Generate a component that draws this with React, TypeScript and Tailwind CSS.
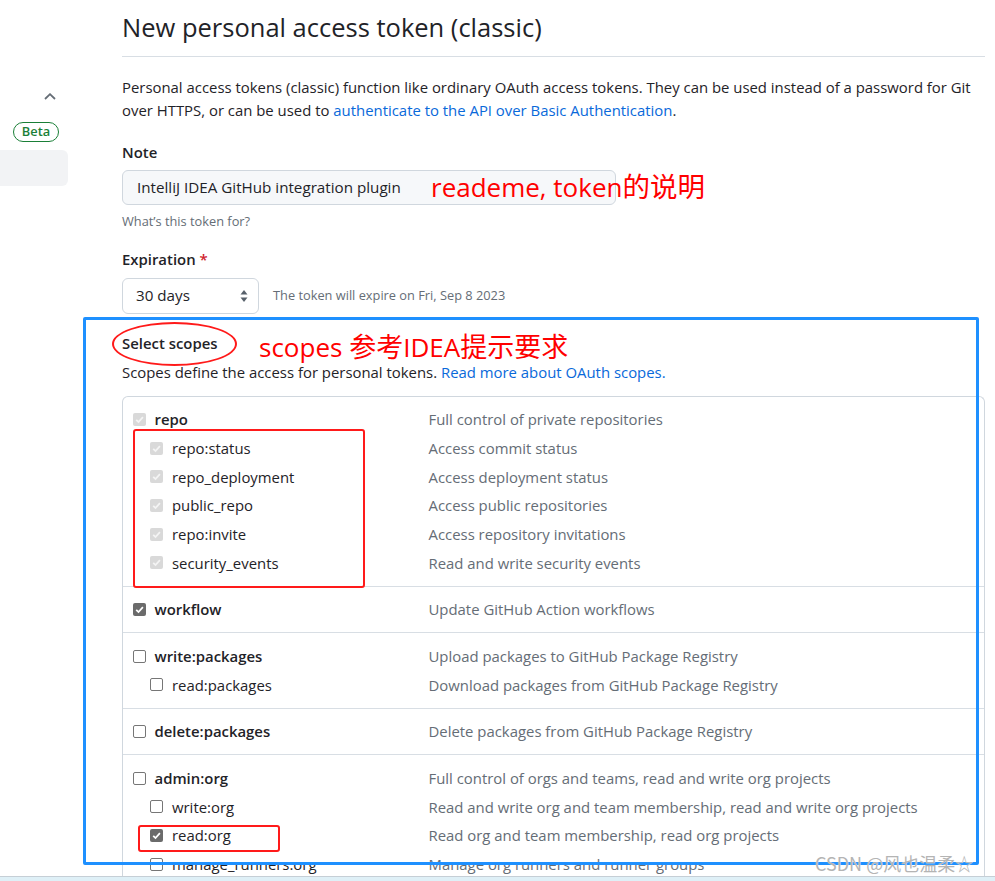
import React from "react";

type State = "off" | "on" | "dim";
type Scope = { name: string; desc: string; state: State; child?: boolean };

const groups: Scope[][] = [
  [
    { name: "repo", desc: "Full control of private repositories", state: "dim" },
    { name: "repo:status", desc: "Access commit status", state: "dim", child: true },
    { name: "repo_deployment", desc: "Access deployment status", state: "dim", child: true },
    { name: "public_repo", desc: "Access public repositories", state: "dim", child: true },
    { name: "repo:invite", desc: "Access repository invitations", state: "dim", child: true },
    { name: "security_events", desc: "Read and write security events", state: "dim", child: true },
  ],
  [{ name: "workflow", desc: "Update GitHub Action workflows", state: "on" }],
  [
    { name: "write:packages", desc: "Upload packages to GitHub Package Registry", state: "off" },
    { name: "read:packages", desc: "Download packages from GitHub Package Registry", state: "off", child: true },
  ],
  [{ name: "delete:packages", desc: "Delete packages from GitHub Package Registry", state: "off" }],
  [
    { name: "admin:org", desc: "Full control of orgs and teams, read and write org projects", state: "off" },
    { name: "write:org", desc: "Read and write org and team membership, read and write org projects", state: "off", child: true },
    { name: "read:org", desc: "Read org and team membership, read org projects", state: "on", child: true },
    { name: "manage_runners:org", desc: "Manage org runners and runner groups", state: "off", child: true },
  ],
];

const Box = ({ state }: { state: State }) => {
  if (state === "off") {
    return <span className="block h-[13px] w-[13px] shrink-0 rounded-[2px] border border-[#767676] bg-white" />;
  }
  return (
    <span
      className={`flex h-[13px] w-[13px] shrink-0 items-center justify-center rounded-[2px] ${
        state === "on" ? "bg-[#6b6b6b]" : "bg-[#d9d9d9]"
      }`}
    >
      <svg viewBox="0 0 12 12" className="h-[11px] w-[11px]">
        <path
          d="M2.4 6.3 L4.9 8.7 L9.7 3.4"
          fill="none"
          stroke={state === "on" ? "#ffffff" : "#f4f4f4"}
          strokeWidth="1.9"
        />
      </svg>
    </span>
  );
};

const ScopeRow = ({ s }: { s: Scope }) => (
  <div className="flex h-[28.7px] items-center">
    <div className={`flex w-[296px] shrink-0 items-center gap-[9px] ${s.child ? "pl-[17.5px]" : ""}`}>
      <Box state={s.state} />
      <span className={s.child ? "text-[#1f2328]" : "font-semibold text-[#1f2328]"}>{s.name}</span>
    </div>
    <span className="text-[#656d76]">{s.desc}</span>
  </div>
);

export default function App() {
  return (
    <div className="relative h-[881px] w-[995px] overflow-hidden bg-white font-['Open_Sans',sans-serif] text-[14.9px] text-[#1f2328]">
      <div className="flex h-[876px] overflow-hidden">
        {/* sidebar */}
        <aside className="w-[122px] shrink-0 pt-[93px]">
          <svg viewBox="0 0 12 7" className="ml-[44px] block h-[7px] w-[12px]">
            <path d="M1 6 L6 1.2 L11 6" fill="none" stroke="#656d76" strokeWidth="1.8" />
          </svg>
          <div className="ml-[13px] mt-[22px] flex h-[20px] w-[46px] items-center justify-center rounded-full border border-[#1a7f37] text-[12.8px] font-semibold text-[#1a7f37]">
            Beta
          </div>
          <div className="mt-[8px] h-[36px] w-[68px] rounded-r-md bg-[#f2f3f5]" />
        </aside>

        {/* main */}
        <main className="w-[863px] shrink-0">
          <div className="border-b border-[#d8dee4] pb-[13px] pt-[11px]">
            <h2 className="text-[25.5px] leading-[32px] font-normal">New personal access token (classic)</h2>
          </div>

          <p className="mt-[19px] leading-[23px]">
            Personal access tokens (classic) function like ordinary OAuth access tokens. They can be used instead of a password for Git
            <br />
            over HTTPS, or can be used to{" "}
            <span className="text-[#0969da]">authenticate to the API over Basic Authentication</span>.
          </p>

          <div className="mt-[19px] font-semibold leading-[23px]">Note</div>
          <div className="mt-[5.5px] flex h-[35px] w-[494px] items-center rounded-md border border-[#d0d7de] bg-[#f6f8fa] pl-[14px] text-[15.2px]">
            IntelliJ IDEA GitHub integration plugin
          </div>
          <div className="mt-[7px] text-[12.8px] leading-[18px] text-[#656d76]">What’s this token for?</div>

          <div className="mt-[18.5px] font-semibold leading-[23px]">
            Expiration <span className="text-[#cf222e]">*</span>
          </div>
          <div className="mt-[6.5px] flex items-center gap-[14px]">
            <div className="flex h-[36px] w-[137px] items-center justify-between rounded-md border border-[#d0d7de] bg-white pl-[13px] pr-[10px] text-[15.2px]">
              <span>30 days</span>
              <svg viewBox="0 0 8 14" className="h-[14px] w-[8px]">
                <path d="M4 1 L7.5 5.5 L0.5 5.5 Z" fill="#57606a" />
                <path d="M4 13 L7.5 8.5 L0.5 8.5 Z" fill="#57606a" />
              </svg>
            </div>
            <span className="text-[12.8px] text-[#656d76]">The token will expire on Fri, Sep 8 2023</span>
          </div>

          <div className="mt-[18.5px] font-semibold leading-[23px]">Select scopes</div>
          <p className="mt-[6px] leading-[23px]">
            Scopes define the access for personal tokens.{" "}
            <span className="text-[#0969da]">Read more about OAuth scopes.</span>
          </p>

          <div className="mt-[11.5px] rounded-t-md border border-b-0 border-[#d0d7de] pl-[9.5px]">
            {groups.map((g, i) => (
              <div key={i} className={`py-[8.5px] ${i > 0 ? "-ml-[9.5px] border-t border-[#d8dee4] pl-[9.5px]" : ""}`}>
                {g.map((s) => (
                  <ScopeRow key={s.name} s={s} />
                ))}
              </div>
            ))}
          </div>
        </main>
      </div>

      <div className="h-[5px] border-t border-[#c6cfd6] bg-[#dff0f7]" />

      {/* annotations */}
      <div className="absolute left-[83px] top-[317px] h-[548px] w-[896px] rounded-[2px] border-[3px] border-[#1e90ff]" />
      <div className="absolute left-[112px] top-[322px] h-[44px] w-[125px] rounded-[50%] border-2 border-[#ff1a1a]" />
      <div className="absolute left-[133px] top-[429px] h-[159px] w-[232px] rounded-[3px] border-2 border-[#ff1a1a]" />
      <div className="absolute left-[138px] top-[825px] h-[27px] w-[142px] rounded-[3px] border-2 border-[#ff1a1a]" />
      <div className="absolute left-[431px] top-[174px] font-['Open_Sans','Noto_Sans_CJK_SC',sans-serif] text-[26px] leading-[26px] text-[#ff0000]">
        reademe, token<span className="text-[27.5px]">的说明</span>
      </div>
      <div className="absolute left-[259px] top-[334px] font-['Open_Sans','Noto_Sans_CJK_SC',sans-serif] text-[26px] leading-[26px] text-[#ff0000]">
        scopes <span className="text-[27px]">参考</span>IDEA<span className="text-[27px]">提示要求</span>
      </div>
      <div className="absolute left-[815px] top-[850px] font-['Noto_Sans_CJK_SC',sans-serif] text-[18px] leading-[26px] text-[#b4b4b4] [text-shadow:0_0_1px_#fff]">
        CSDN @风也温柔☆
      </div>
    </div>
  );
}
